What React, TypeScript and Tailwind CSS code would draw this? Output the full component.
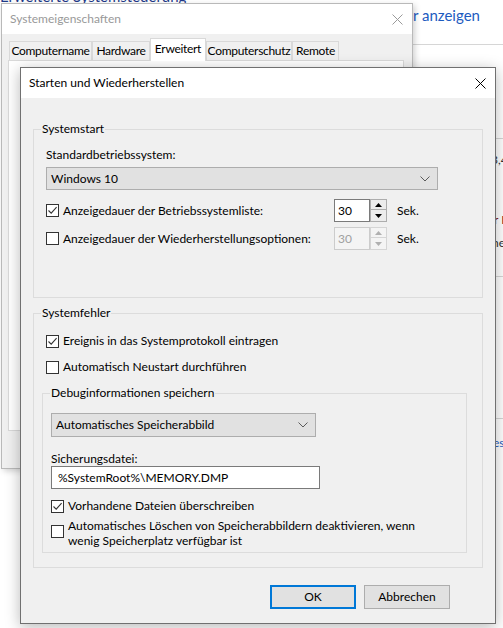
import type { ReactNode } from "react"

const ui = "font-['Segoe_UI','Lato','Noto_Sans',sans-serif]"

function CloseX({ color = "#000000" }: { color?: string }) {
  return (
    <svg width="11" height="11" viewBox="0 0 11 11" className="shrink-0">
      <path d="M0.5 0.5 L10.5 10.5 M10.5 0.5 L0.5 10.5" stroke={color} strokeWidth="1" fill="none" />
    </svg>
  )
}

function Check({ checked }: { checked?: boolean }) {
  return (
    <span className="w-[13px] h-[13px] border border-[#333333] bg-white flex items-center justify-center shrink-0">
      {checked && (
        <svg width="11" height="11" viewBox="0 0 11 11">
          <path d="M1.5 5.5 L4.2 8.2 L9.6 2.2" fill="none" stroke="#333333" strokeWidth="1.1" />
        </svg>
      )}
    </span>
  )
}

function Chevron() {
  return (
    <svg width="10" height="6" viewBox="0 0 10 6" className="shrink-0">
      <path d="M0.5 0.5 L5 5 L9.5 0.5" fill="none" stroke="#5a5a5a" strokeWidth="1" />
    </svg>
  )
}

function Combo({ value, width }: { value: string; width: string }) {
  return (
    <div className={`${width} h-[23px] bg-[#e1e1e1] border border-[#adadad] flex items-center justify-between pl-[4px] pr-[7px]`}>
      <span>{value}</span>
      <Chevron />
    </div>
  )
}

function Arrow({ up, color }: { up?: boolean; color: string }) {
  return (
    <svg width="7" height="4" viewBox="0 0 7 4">
      <path d={up ? "M0 4 L3.5 0 L7 4 Z" : "M0 0 L3.5 4 L7 0 Z"} fill={color} />
    </svg>
  )
}

function Spinner({ disabled }: { disabled?: boolean }) {
  const arrow = disabled ? "#b0b0b0" : "#000000"
  return (
    <div className="flex h-[23px] w-[53px]">
      <div
        className={`w-[36px] h-full border flex items-center pl-[3px] ${
          disabled ? "border-[#cccccc] bg-[#f4f4f4] text-[#a0a0a0]" : "border-[#7a7a7a] bg-white text-black"
        }`}
      >
        30
      </div>
      <div className="w-[17px] h-full flex flex-col">
        <div
          className={`h-[11px] border flex items-center justify-center ${
            disabled ? "border-[#d5d5d5] bg-[#f4f4f4]" : "border-[#adadad] bg-[#ececec]"
          }`}
        >
          <Arrow up color={arrow} />
        </div>
        <div
          className={`h-[12px] border border-t-0 flex items-center justify-center ${
            disabled ? "border-[#d5d5d5] bg-[#f4f4f4]" : "border-[#adadad] bg-[#ececec]"
          }`}
        >
          <Arrow color={arrow} />
        </div>
      </div>
    </div>
  )
}

function Group({ title, className, children }: { title: string; className: string; children: ReactNode }) {
  return (
    <div className={`relative border border-[#dcdcdc] shrink-0 ${className}`}>
      <span className="absolute left-[7px] top-[-9px] px-[1px] bg-[#f0f0f0] leading-[16px] whitespace-nowrap">{title}</span>
      {children}
    </div>
  )
}

function CheckRow({ label, checked, className = "" }: { label: string; checked?: boolean; className?: string }) {
  return (
    <div className={`flex items-center gap-[4px] h-[16px] ${className}`}>
      <Check checked={checked} />
      <span className="leading-[16px] whitespace-nowrap">{label}</span>
    </div>
  )
}

const tabs = [
  { name: "Computername", w: "w-[83px]" },
  { name: "Hardware", w: "w-[58px]" },
  { name: "Erweitert", w: "w-[56px]", active: true },
  { name: "Computerschutz", w: "w-[86px]" },
  { name: "Remote", w: "w-[47px]" },
]

export default function App() {
  return (
    <div className={`relative w-[503px] h-[628px] overflow-hidden bg-white text-[12px] text-black ${ui}`}>
      {/* Systemsteuerung im Hintergrund */}
      <div className="absolute left-[0px] top-[-15px] text-[15px] text-[#1e3a8a] whitespace-nowrap">Erweiterte Systemsteuerung</div>
      <div className="absolute left-[413px] top-[4px] text-[15px] text-[#1d5bbf] whitespace-nowrap">r anzeigen</div>
      <div className="absolute left-[412px] right-0 top-[44px] h-px bg-[#d6d6d6]" />
      <div className="absolute left-[490px] right-0 top-[138px] h-px bg-[#d6d6d6]" />
      <div className="absolute left-[490px] right-0 top-[276px] h-px bg-[#d6d6d6]" />
      <div className="absolute left-[490px] right-0 top-[418px] h-px bg-[#d6d6d6]" />
      <div className="absolute left-[491px] top-[151px] whitespace-nowrap text-[#333333]">3,4</div>
      <div className="absolute left-[494px] top-[211px] whitespace-nowrap text-[#7a1020]">r I</div>
      <div className="absolute left-[492px] top-[234px] whitespace-nowrap text-[#333333]">ner</div>
      <div className="absolute left-[493px] top-[434px] whitespace-nowrap text-[#1d5bbf]">ese</div>

      {/* Systemeigenschaften (inaktiv) */}
      <div className="absolute left-[1px] top-[3px] w-[412px] h-[466px] border border-[#b9b9b9] bg-[#f0f0f0] shadow-[2px_2px_6px_rgba(0,0,0,0.18)] flex flex-col">
        <div className="h-[30px] bg-white flex items-center justify-between pl-[8px] pr-[9px] text-[#999999] shrink-0">
          <span>Systemeigenschaften</span>
          <CloseX color="#9a9a9a" />
        </div>
        <div className="flex-1 flex flex-col pl-[6px] pr-[8px] pt-[4px] pb-[37px]">
          <div className="flex items-end h-[22px] pl-[1px] shrink-0 tracking-[-0.3px]">
            {tabs.map((t) =>
              t.active ? (
                <div
                  key={t.name}
                  className={`${t.w} h-[23px] mb-[-1px] relative z-10 bg-white border border-b-0 border-[#d9d9d9] flex items-center justify-center pb-[3px] whitespace-nowrap`}
                >
                  {t.name}
                </div>
              ) : (
                <div
                  key={t.name}
                  className={`${t.w} h-[19px] bg-[#f0f0f0] border border-b-0 border-[#d9d9d9] flex items-center justify-center whitespace-nowrap`}
                >
                  {t.name}
                </div>
              )
            )}
          </div>
          <div className="flex-1 bg-white border border-[#d9d9d9]" />
        </div>
      </div>

      {/* Starten und Wiederherstellen */}
      <div className="absolute left-[20px] top-[67px] w-[476px] h-[557px] border border-[#707070] bg-[#f0f0f0] shadow-[0_3px_14px_rgba(0,0,0,0.28)] flex flex-col">
        <div className="h-[30px] bg-white flex items-center justify-between pl-[8px] pr-[9px] shrink-0">
          <span>Starten und Wiederherstellen</span>
          <CloseX />
        </div>
        <div className="flex-1 flex flex-col px-[12px] pt-[31px]">
          <Group title="Systemstart" className="h-[169px] pl-[12px] pt-[17px]">
            <div className="leading-[16px] h-[16px]">Standardbetriebssystem:</div>
            <div className="mt-[4px]">
              <Combo value="Windows 10" width="w-[392px]" />
            </div>
            <div className="mt-[9px] flex items-center h-[23px]">
              <div className="w-[288px]">
                <CheckRow label="Anzeigedauer der Betriebssystemliste:" checked />
              </div>
              <Spinner />
              <span className="ml-[10px]">Sek.</span>
            </div>
            <div className="mt-[5px] flex items-center h-[23px]">
              <div className="w-[288px]">
                <CheckRow label="Anzeigedauer der Wiederherstellungsoptionen:" />
              </div>
              <Spinner disabled />
              <span className="ml-[10px]">Sek.</span>
            </div>
          </Group>

          <Group title="Systemfehler" className="mt-[15px] h-[255px] pl-[12px] pt-[19px]">
            <CheckRow label="Ereignis in das Systemprotokoll eintragen" checked />
            <CheckRow label="Automatisch Neustart durchführen" className="mt-[10px]" />
            <div className="ml-[-4px] mt-[18px]">
              <Group title="Debuginformationen speichern" className="w-[425px] h-[160px] pl-[8px] pt-[19px]">
                <Combo value="Automatisches Speicherabbild" width="w-[265px] h-[24px]" />
                <div className="mt-[15px] h-[14px] leading-[14px]">Sicherungsdatei:</div>
                <div className="w-[269px] h-[23px] bg-white border border-[#7a7a7a] flex items-center pl-[6px]">
                  %SystemRoot%\MEMORY.DMP
                </div>
                <CheckRow label="Vorhandene Dateien überschreiben" checked className="mt-[9px]" />
                <div className="mt-[4px] flex items-start gap-[4px]">
                  <span className="mt-[7px]">
                    <Check />
                  </span>
                  <div className="flex flex-col leading-[15px]">
                    <span>Automatisches Löschen von Speicherabbildern deaktivieren, wenn</span>
                    <span>wenig Speicherplatz verfügbar ist</span>
                  </div>
                </div>
              </Group>
            </div>
          </Group>

          <div className="mt-[17px] flex justify-end gap-[8px] pr-[33px]">
            <button className="w-[86px] h-[24px] bg-[#e1e1e1] border-2 border-[#0078d7] flex items-center justify-center">
              OK
            </button>
            <button className="w-[86px] h-[24px] bg-[#e1e1e1] border border-[#adadad] flex items-center justify-center">
              Abbrechen
            </button>
          </div>
        </div>
      </div>
    </div>
  )
}
